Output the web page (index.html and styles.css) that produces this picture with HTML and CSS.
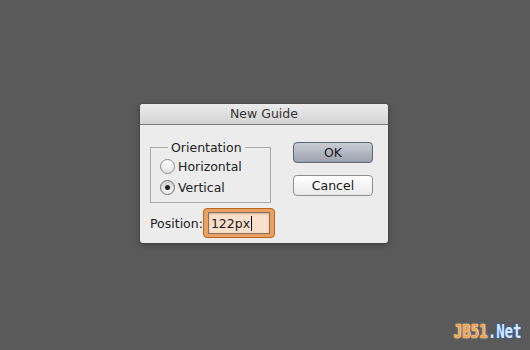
FILE: index.html
```html
<!DOCTYPE html>
<html lang="en">
<head>
  <meta charset="UTF-8">
  <title>New Guide</title>
  <link rel="stylesheet" href="styles.css">
</head>
<body>
  <div class="dialog">
    <div class="title-bar">New Guide</div>
    <div class="dialog-body">
      <div class="top-row">
        <fieldset class="orientation">
          <legend>Orientation</legend>
          <label class="radio-row"><span class="radio"></span>Horizontal</label>
          <label class="radio-row"><span class="radio checked"></span>Vertical</label>
        </fieldset>
        <div class="buttons">
          <button class="btn btn-default">OK</button>
          <button class="btn">Cancel</button>
        </div>
      </div>
      <div class="position-row">
        <span class="position-label">Position:</span>
        <div class="field-focus">
          <div class="field">122px<span class="caret"></span></div>
        </div>
      </div>
    </div>
  </div>

  <div class="watermark"><span class="wm-orange">JB51</span><span class="wm-blue">.Net</span></div>
</body>
</html>
```

FILE: styles.css
```css
body {
  margin: 0;
  height: 350px;
  background: #5a5a5a;
  font-family: "DejaVu Sans", "Liberation Sans", sans-serif;
  display: flex;
  justify-content: center;
  align-items: flex-start;
  padding-top: 104px;
  box-sizing: border-box;
  position: relative;
  overflow: hidden;
}

.dialog {
  width: 248px;
  height: 139px;
  background: #ececec;
  border-radius: 3px;
  box-shadow: 0 0 1px rgba(0, 0, 0, 0.6), 0 2px 6px rgba(0, 0, 0, 0.3);
  overflow: hidden;
  margin-left: -2px;
}

.title-bar {
  height: 20px;
  line-height: 20px;
  text-align: center;
  font-size: 12.5px;
  color: #333;
  background: linear-gradient(#ebebeb, #d3d3d3);
  border-bottom: 1px solid #7e7e7e;
}

.dialog-body {
  padding: 15px 15px 0 10px;
}

.top-row {
  display: flex;
  justify-content: space-between;
}

.orientation {
  width: 110px;
  margin: 0;
  padding: 1px 0 4px 9px;
  border: 1px solid #a9a9a9;
}

.orientation legend {
  font-size: 12.5px;
  color: #222;
  padding: 0 3px;
  margin-left: 8px;
}

.radio-row {
  display: flex;
  align-items: center;
  gap: 3px;
  font-size: 12.5px;
  color: #222;
  height: 21px;
}

.radio {
  width: 15px;
  height: 15px;
  border-radius: 50%;
  border: 1px solid #8c8c8c;
  background: linear-gradient(#ffffff, #e4e4e4);
  box-sizing: border-box;
  display: flex;
  align-items: center;
  justify-content: center;
}

.radio.checked {
  background: linear-gradient(#d0d0d0, #f4f4f4);
  border-color: #6f6f6f;
}

.radio.checked::after {
  content: "";
  width: 5px;
  height: 5px;
  border-radius: 50%;
  background: #222;
}

.buttons {
  display: flex;
  flex-direction: column;
  gap: 12px;
  padding-top: 2px;
}

.btn {
  width: 80px;
  height: 21px;
  font-family: inherit;
  font-size: 12.5px;
  color: #1a1a1a;
  border: 1px solid #8e8e8e;
  border-radius: 4px;
  background: linear-gradient(#ffffff, #eaeaea);
  padding: 0;
}

.btn-default {
  background: linear-gradient(#c9cdd6, #9ca2ae);
  border-color: #5f636c;
}

.position-row {
  display: flex;
  align-items: center;
  margin-top: 5px;
}

.position-label {
  font-size: 12.5px;
  color: #222;
}

.field-focus {
  padding: 3px 4px;
  border: 1px solid #c0661a;
  border-radius: 4px;
  background: #e8a064;
}

.field {
  width: 58px;
  height: 20px;
  padding-left: 2px;
  font-size: 12.5px;
  color: #1a1a1a;
  background: #f9e0cb;
  border: 1px solid #8d6f56;
  box-shadow: inset 0 1px 2px rgba(120, 80, 50, 0.35);
  display: flex;
  align-items: center;
}

.caret {
  width: 1px;
  height: 15px;
  background: #000;
  margin-left: 1px;
}

.watermark {
  position: absolute;
  right: 8px;
  bottom: 8px;
  font-family: "DejaVu Sans Mono", monospace;
  font-size: 19px;
  font-weight: bold;
  transform: scaleX(0.74);
  transform-origin: right bottom;
}

.wm-orange {
  color: #f5a44c;
  text-shadow: 0 0 1px #fff4e0, 0 0 2px #fff4e0;
}

.wm-blue {
  color: #d8e8ff;
  text-shadow: 0 0 1px #2f6fd0, 0 0 1px #2f6fd0, 0 0 2px #2f6fd0;
}
```
